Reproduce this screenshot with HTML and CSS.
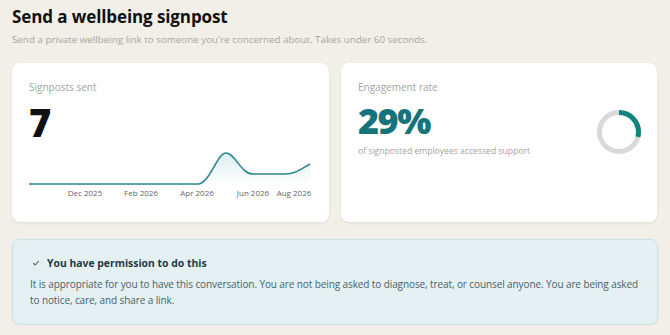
FILE: index.html
```html
<!DOCTYPE html>
<html lang="en">
<head>
  <meta charset="UTF-8">
  <title>Send a wellbeing signpost</title>
  <link rel="stylesheet" href="styles.css">
</head>
<body>
  <header class="page-head">
    <h1>Send a wellbeing signpost</h1>
    <p class="lead">Send a private wellbeing link to someone you're concerned about. Takes under 60 seconds.</p>
  </header>

  <section class="stats">
    <div class="card">
      <div class="card-label">Signposts sent</div>
      <div class="big-num">7</div>
      <svg class="chart" width="283" height="62" viewBox="0 0 283 62">
        <defs>
          <linearGradient id="fade" x1="0" y1="0" x2="0" y2="1">
            <stop offset="0" stop-color="#2b8792" stop-opacity="0.16"/>
            <stop offset="1" stop-color="#2b8792" stop-opacity="0"/>
          </linearGradient>
        </defs>
        <path d="M0 39 L170 39 C182 36 188 8 197 8 C206 8 212 29 224 29 L256 29 C266 29 272 24 281 19 L281 39 L0 39 Z" fill="url(#fade)"/>
        <path d="M0 39 L170 39 C182 36 188 8 197 8 C206 8 212 29 224 29 L256 29 C266 29 272 24 281 19" fill="none" stroke="#2b8792" stroke-width="1.6"/>
        <g class="axis">
          <text x="56" y="51" text-anchor="middle">Dec 2025</text>
          <text x="112" y="51" text-anchor="middle">Feb 2026</text>
          <text x="168" y="51" text-anchor="middle">Apr 2026</text>
          <text x="224" y="51" text-anchor="middle">Jun 2026</text>
          <text x="265" y="51" text-anchor="middle">Aug 2026</text>
        </g>
      </svg>
    </div>

    <div class="card card-rate">
      <div class="rate-text">
        <div class="card-label">Engagement rate</div>
        <div class="big-num teal">29%</div>
        <div class="card-note">of signposted employees accessed support</div>
      </div>
      <svg class="donut" width="48" height="48" viewBox="0 0 48 48">
        <circle cx="24" cy="24" r="19.5" fill="none" stroke="#d9d9d9" stroke-width="5"/>
        <circle cx="24" cy="24" r="19.5" fill="none" stroke="#11847f" stroke-width="5"
                stroke-dasharray="35.5 200" transform="rotate(-90 24 24)"/>
      </svg>
    </div>
  </section>

  <section class="note-box">
    <div class="note-title">
      <svg width="8" height="8" viewBox="0 0 8 8"><path d="M1.2 4.2 L3.1 6 L6.8 2" fill="none" stroke="#3d6670" stroke-width="1.1"/></svg>
      You have permission to do this
    </div>
    <p>It is appropriate for you to have this conversation. You are not being asked to diagnose, treat, or counsel anyone. You are being asked to notice, care, and share a link.</p>
  </section>
</body>
</html>
```

FILE: styles.css
```css
body {
  margin: 0;
  padding: 6px 12px 0;
  background: #f2eee8;
  font-family: "Open Sans", "Noto Sans", sans-serif;
  color: #111;
}
.page-head h1 {
  margin: 0;
  font-size: 17px;
  font-weight: 700;
  letter-spacing: -0.1px;
  line-height: 22px;
}
.page-head .lead {
  margin: 5px 0 0;
  font-size: 9.8px;
  color: #a9a6a2;
  line-height: 14px;
}
.stats {
  display: grid;
  grid-template-columns: 317px 316px;
  gap: 12px;
  margin-top: 16px;
}
.card {
  background: #fff;
  border-radius: 8px;
  height: 159px;
  box-sizing: border-box;
  padding: 18px 17px 0;
  box-shadow: 0 1px 3px rgba(0,0,0,0.08);
}
.card-label {
  font-size: 10px;
  color: #a4a4a4;
  line-height: 12px;
}
.big-num {
  font-size: 38px;
  font-weight: 800;
  line-height: 40px;
  margin-top: 9px;
  letter-spacing: -1px;
}
.big-num.teal {
  color: #17737b;
  font-size: 36px;
  letter-spacing: -1.5px;
  line-height: 36px;
  margin-top: 10px;
}
.chart {
  display: block;
  margin-top: 3px;
}
.axis text {
  font-size: 8px;
  fill: #666;
  font-family: "Open Sans", sans-serif;
}
.card-rate {
  display: flex;
  justify-content: space-between;
  align-items: flex-start;
}
.card-note {
  font-size: 8.6px;
  color: #a4a4a4;
  margin-top: 6px;
}
.donut {
  margin-top: 27px;
  margin-right: -3px;
}
.note-box {
  margin-top: 17px;
  background: #e5f0f2;
  border: 1px solid #cbe0e5;
  border-radius: 8px;
  padding: 16px 17px 16px;
  box-shadow: 0 1px 3px rgba(0,0,0,0.06);
}
.note-title {
  display: flex;
  align-items: center;
  gap: 7px;
  font-size: 10.4px;
  font-weight: 700;
  color: #1f3a45;
  padding-left: 2px;
}
.note-box p {
  margin: 6px 0 0;
  font-size: 10px;
  letter-spacing: -0.1px;
  line-height: 16px;
  color: #45636e;
}
```
